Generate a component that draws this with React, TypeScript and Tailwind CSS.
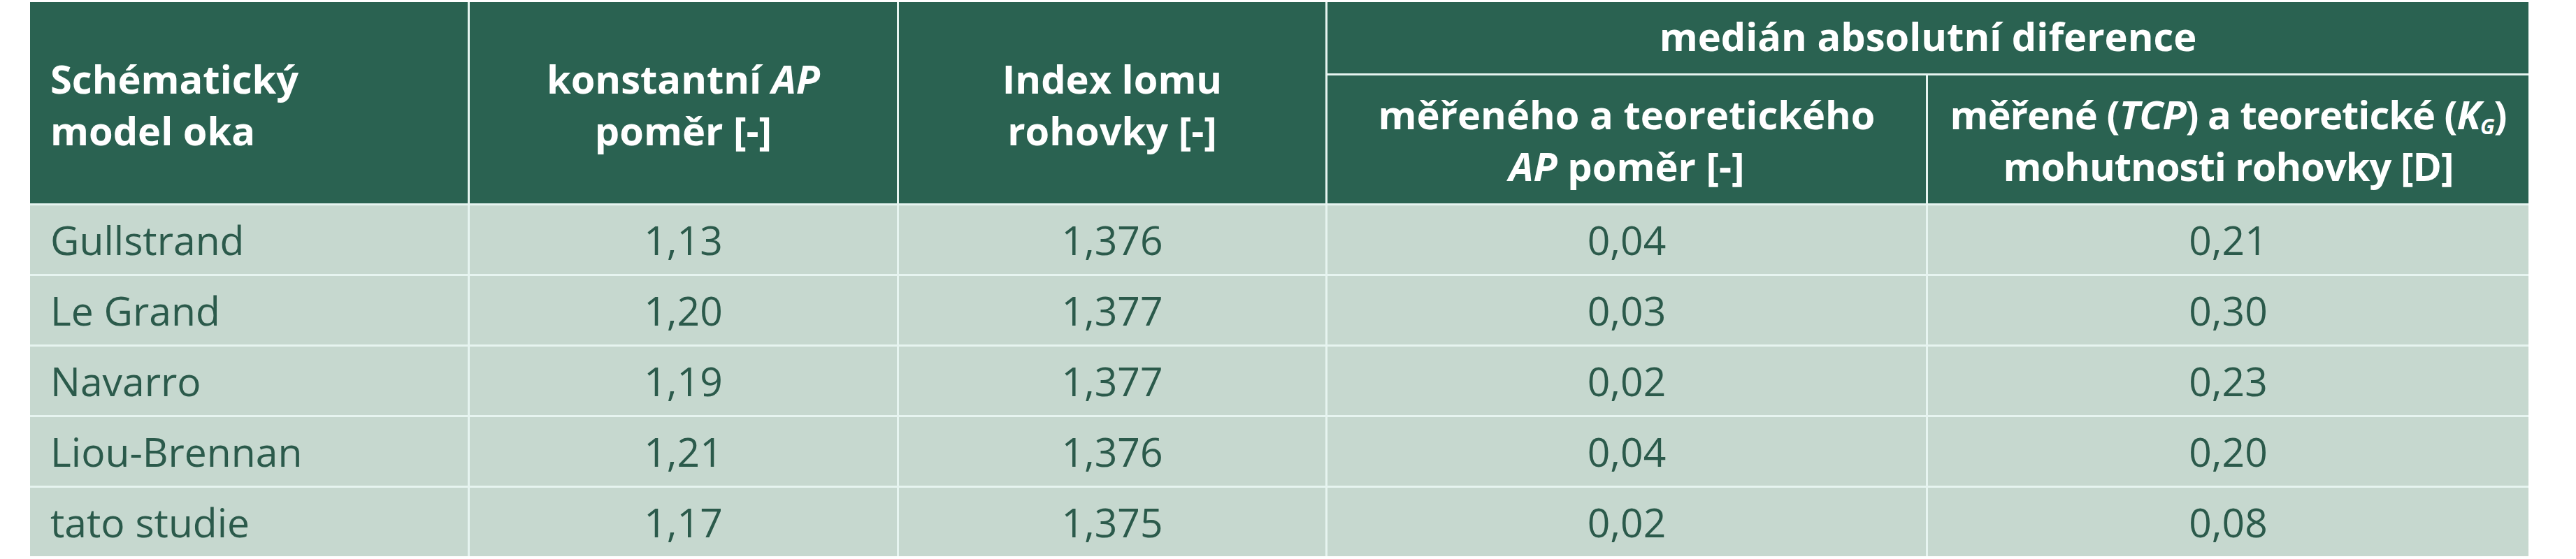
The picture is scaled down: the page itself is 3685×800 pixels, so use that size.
import React from 'react';

const rows = [
  ['Gullstrand', '1,13', '1,376', '0,04', '0,21'],
  ['Le Grand', '1,20', '1,377', '0,03', '0,30'],
  ['Navarro', '1,19', '1,377', '0,02', '0,23'],
  ['Liou-Brennan', '1,21', '1,376', '0,04', '0,20'],
  ['tato studie', '1,17', '1,375', '0,02', '0,08'],
];

const head = 'bg-[#2a6251] text-white font-bold text-[56px] leading-[74px] flex items-center whitespace-nowrap';
const cell = 'bg-[#c6d8cf] text-[#2b5a4b] text-[57px] leading-[76px] flex items-center whitespace-nowrap';

export default function App() {
  return (
    <div className="w-[3685px] h-[800px] bg-white pl-[43px] pt-[3px] font-['Open_Sans',sans-serif]">
      <div className="grid grid-cols-[626px_611px_610px_856px_859px] grid-rows-[102px_183px_repeat(5,98px)] gap-[3px] w-fit bg-[#e6f4f0]">
        {/* Header */}
        <div className={`${head} row-span-2 pl-[29px] pt-[4px]`}>
          <div>
            Schématický
            <br />
            model oka
          </div>
        </div>
        <div className={`${head} row-span-2 justify-center text-center pt-[4px]`}>
          <div>
            konstantní <i>AP</i>
            <br />
            poměr [-]
          </div>
        </div>
        <div className={`${head} row-span-2 justify-center text-center pt-[4px]`}>
          <div>
            Index lomu
            <br />
            rohovky [-]
          </div>
        </div>
        <div className={`${head} col-span-2 justify-center pb-[6px]`}>medián absolutní diference</div>
        <div className={`${head} justify-center text-center`}>
          <div>
            měřeného a teoretického
            <br />
            <i>AP</i> poměr [-]
          </div>
        </div>
        <div className={`${head} justify-center text-center tracking-[-1px]`}>
          <div>
            měřené (<i>TCP</i>) a teoretické (<i>K</i>
            <sub className="text-[30px] italic">G</sub>)
            <br />
            mohutnosti rohovky [D]
          </div>
        </div>

        {/* Body */}
        {rows.map((r) => (
          <React.Fragment key={r[0]}>
            <div className={`${cell} pl-[29px]`}>{r[0]}</div>
            <div className={`${cell} justify-center`}>{r[1]}</div>
            <div className={`${cell} justify-center`}>{r[2]}</div>
            <div className={`${cell} justify-center`}>{r[3]}</div>
            <div className={`${cell} justify-center`}>{r[4]}</div>
          </React.Fragment>
        ))}
      </div>
    </div>
  );
}
